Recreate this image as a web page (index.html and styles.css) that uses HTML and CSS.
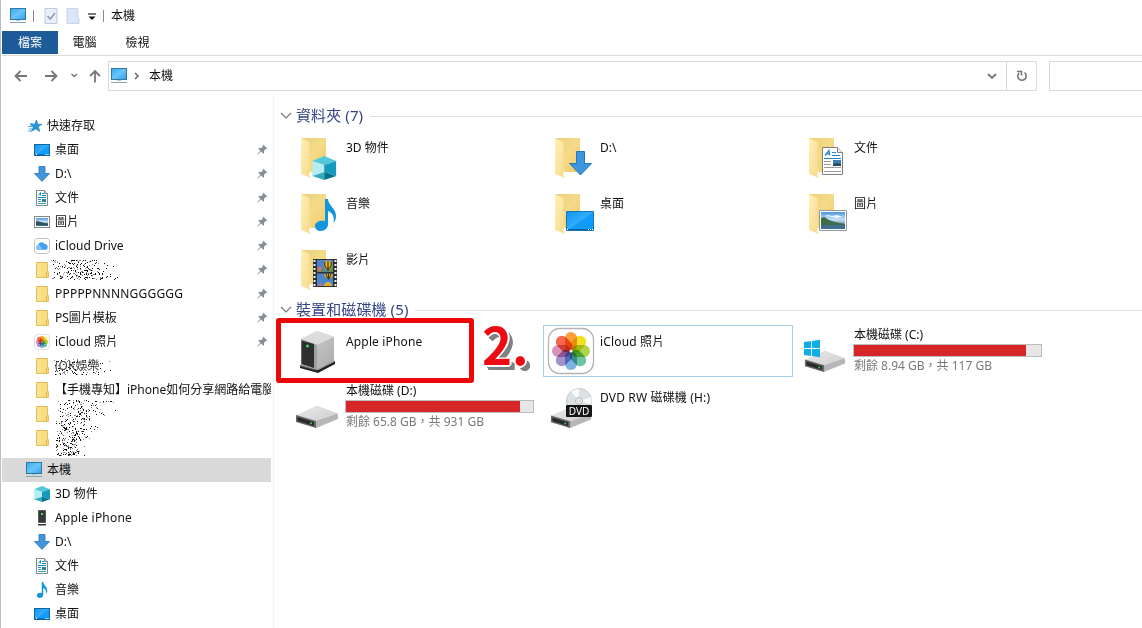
FILE: index.html
```html
<!doctype html>
<html lang="zh-Hant">
  <head>
    <meta charset="UTF-8" />
    <meta name="viewport" content="width=device-width, initial-scale=1.0" />
    <title>本機</title>
    <link rel="stylesheet" href="styles.css">
  </head>
  <body>
    <svg class="sprite" aria-hidden="true">
      <defs>
        <linearGradient id="gBlue" x1="0" y1="0" x2="1" y2="1">
          <stop offset="0" stop-color="#36a9f5" /><stop offset=".5" stop-color="#6ac5fa" /><stop offset="1" stop-color="#2d9fee" />
        </linearGradient>
        <linearGradient id="gDesk" x1="0" y1="0" x2="1" y2="1">
          <stop offset="0" stop-color="#0d96f6" /><stop offset=".5" stop-color="#35acfb" /><stop offset=".52" stop-color="#149bf8" /><stop offset="1" stop-color="#079cff" />
        </linearGradient>
        <linearGradient id="gFolder" x1="0" y1="0" x2="1" y2="1">
          <stop offset="0" stop-color="#ecd07c" /><stop offset=".5" stop-color="#f5da87" /><stop offset="1" stop-color="#eecb68" />
        </linearGradient>
        <linearGradient id="gFlap" x1="0" y1="0" x2="1" y2="1">
          <stop offset="0" stop-color="#fff0b8" /><stop offset="1" stop-color="#f6d98a" />
        </linearGradient>
        <linearGradient id="gTop" x1="0" y1="0" x2="1" y2="1">
          <stop offset="0" stop-color="#e9e9e9" /><stop offset="1" stop-color="#cfcfd1" />
        </linearGradient>
        <linearGradient id="gTower" x1="0" y1="0" x2="1" y2="1">
          <stop offset="0" stop-color="#d4d4d4" /><stop offset="1" stop-color="#a9a9a9" />
        </linearGradient>
        <linearGradient id="gSky" x1="0" y1="0" x2="0" y2="1">
          <stop offset="0" stop-color="#4f94dd" /><stop offset=".45" stop-color="#c5e2f7" /><stop offset=".7" stop-color="#6f9fb8" /><stop offset="1" stop-color="#355e7c" />
        </linearGradient>
      </defs>

      <symbol id="pc" viewBox="0 0 18 16">
        <rect x="1.500" y=".5" width="15" height="11" fill="url(#gBlue)" stroke="#33769f" />
        <path d="M7 12h4v1H7z" fill="#a6c9dd" />
        <path d="M1 14.500h16" stroke="#86a2b3" />
      </symbol>
      <symbol id="star" viewBox="0 0 16 16">
        <path d="M9.500 2l1.200 4.200H15l-3.700 2.500 1.600 5-4.100-2.800-4.500 2.600 2-4.600L3 6.200h4.600z" fill="#2596da" stroke="#197bbd" stroke-width=".6" />
        <path d="M1 8.500h4M2 11h3M1 13h3M3 5.800h3" stroke="#46a9e2" />
      </symbol>
      <symbol id="desk" viewBox="0 0 16 16">
        <rect x=".5" y="2.500" width="15" height="11" fill="url(#gDesk)" stroke="#17679f" />
        <path d="M1 13h1M3 13h8" stroke="#0b4b7d" />
        <path d="M2 12.500h1M11.500 12.500h1M13.500 12.500h1" stroke="#fff" />
      </symbol>
      <symbol id="down" viewBox="0 0 16 16">
        <path d="M5 .5h6v7h4.500L8 15.400.5 7.500H5z" fill="#3f96dc" stroke="#2373b0" stroke-width=".8" />
      </symbol>
      <symbol id="doc" viewBox="0 0 16 16">
        <path d="M2.500.5h8l3 3v12h-11z" fill="#fff" stroke="#7e8a91" />
        <path d="M10.500.5v3h3" fill="#e3e7ea" stroke="#7e8a91" />
        <path d="M4.500 5.500L6.500 2.500v3M8 3.500h2M8 5.500h4M4 7.500h8" fill="none" stroke="#1793b9" />
        <path d="M4 9.500h3M4 11.500h3M4 13.500h8" stroke="#3f9ebc" />
        <path d="M8 9h4v3H8z" fill="#2f8196" />
      </symbol>
      <symbol id="pic" viewBox="0 0 16 16">
        <rect x=".5" y="2.500" width="15" height="11" fill="#fff" stroke="#82898e" />
        <path d="M2 4h12v8H2z" fill="url(#gSky)" />
        <path d="M2 7l3 .5L10 9l4 .4V11H2z" fill="#2c5261" />
      </symbol>
      <symbol id="cloud" viewBox="0 0 16 16">
        <rect x=".5" y=".5" width="15" height="15" rx="3" fill="#fff" stroke="#b9c0c6" />
        <path d="M4.300 11.800a2.300 2.300 0 0 1-.2-4.500A3.600 3.600 0 0 1 10.800 6a3 3 0 0 1 1 5.800z" fill="#3f9ff0" />
        <path d="M4.300 11.800a2.300 2.300 0 1 1 2-3.500 4 4 0 0 1 2 3.500z" fill="#7cc2f8" />
      </symbol>
      <symbol id="fold" viewBox="0 0 16 16">
        <path d="M2.500.5h11v9h.9v5.900H2.500z" fill="#f9dd80" stroke="#e2bd59" />
        <path d="M3 1h4v14H3z" fill="#fde898" opacity=".6" />
        <path d="M12.500 10v5" stroke="#dcb44c" />
      </symbol>
      <symbol id="cube" viewBox="0 0 24 24">
        <path d="M0 5L12 0l12 5-12 4z" fill="#56c6da" />
        <path d="M0 5l12 4v7L0 20z" fill="#b4edf2" />
        <path d="M24 5L12 9v7l12 4z" fill="#149abf" />
        <path d="M0 20l12-4v8z" fill="#34adbe" />
        <path d="M24 20l-12-4v8z" fill="#05728b" />
      </symbol>
      <symbol id="tower-s" viewBox="0 0 16 16">
        <path d="M4.500.5h7v12h-7z" fill="#343a38" stroke="#555b59" />
        <path d="M7 3h2v2H7z" fill="#58d467" />
        <path d="M4 14h8v1.500H4z" fill="#33373a" />
      </symbol>
      <symbol id="note" viewBox="0 0 21 32">
        <path d="M10 0h3c.5 7 8 9 8 17 0 3-1 5-2.500 7 1-6-.5-10-5.500-12v13c0 4-3 7-7 7-3.500 0-6-2-6-5 0-4 5-6 10-5z" fill="#1295dc" />
      </symbol>
      <symbol id="flower" viewBox="0 0 48 48">
        <rect x="1.500" y="1.500" width="45" height="45" rx="11" fill="#fff" stroke="#b4b4b4" stroke-width="1.300" />
        <g class="petals">
          <rect x="18" y="5" width="12" height="18.500" rx="6" fill="#f9a03a" />
          <rect x="18" y="5" width="12" height="18.500" rx="6" fill="#f1e01f" transform="rotate(45 24 24)" />
          <rect x="18" y="5" width="12" height="18.500" rx="6" fill="#b1d249" transform="rotate(90 24 24)" />
          <rect x="18" y="5" width="12" height="18.500" rx="6" fill="#6cc39d" transform="rotate(135 24 24)" />
          <rect x="18" y="5" width="12" height="18.500" rx="6" fill="#7db5e2" transform="rotate(180 24 24)" />
          <rect x="18" y="5" width="12" height="18.500" rx="6" fill="#a592cd" transform="rotate(225 24 24)" />
          <rect x="18" y="5" width="12" height="18.500" rx="6" fill="#d693bc" transform="rotate(270 24 24)" />
          <rect x="18" y="5" width="12" height="18.500" rx="6" fill="#f2694c" transform="rotate(315 24 24)" />
        </g>
        <circle cx="24" cy="24" r="1.500" fill="#fff" />
      </symbol>
      <symbol id="pin" viewBox="0 0 12 12">
        <path d="M7 .8L11.200 5l-1 .7-.8-.2-1.700 1.800.1 2.300-1 .9-2.300-2.300L1 11.500l-.5-.5 3.200-3.500L1.500 5.200l.9-.9 2.300.1L6.500 2.600l-.2-.9z" fill="#858d94" />
      </symbol>

      <symbol id="bigfold" viewBox="0 0 48 48">
        <path d="M8 5h25v34H15z" fill="url(#gFolder)" />
        <path d="M8 5l8.500 4v23l1.500 6v7L8 41z" fill="url(#gFlap)" />
        <path d="M16.500 40l1.500-2v6l-2-1z" fill="#fffdf3" />
      </symbol>
      <symbol id="drive" viewBox="0 0 42 22">
        <path d="M0 10L21 0l21 8v5L20 22 0 15z" fill="#b7b7b9" />
        <path d="M0 9L21 0l21 7.500L20 15z" fill="url(#gTop)" />
        <path d="M0 9l20 6v7L0 16z" fill="#686868" />
        <path d="M1.500 11L18 16v4L1.500 15z" fill="#292b2a" />
        <path d="M14 16.200l2 .6v1.500l-2-.6z" fill="#3fd457" />
      </symbol>
    </svg>

    <div class="window">
      <header class="titlebar">
        <svg class="ico-pc"><use href="#pc" /></svg>
        <span class="sep"></span>
        <svg class="quick" viewBox="0 0 14 16"><path d="M1 .5h12v15H1z" fill="#eaf0fa" stroke="#bccbe0" /><path d="M3.500 8l2.700 3L11 5" fill="none" stroke="#8b99ad" stroke-width="1.500" /></svg>
        <svg class="quick" viewBox="0 0 14 16"><path d="M1 .5h11v10h1v5H1z" fill="#dce6f6" stroke="#c8d5ea" /></svg>
        <svg class="more" viewBox="0 0 8 8"><path d="M0 1h8" stroke="#222" stroke-width="1.200" /><path d="M.5 3.500h7L4 7z" fill="#111" /></svg>
        <span class="sep sep-late"></span>
        <span>本機</span>
      </header>
      <nav class="tabs">
        <span class="tab tab-file">檔案</span>
        <span class="tab">電腦</span>
        <span class="tab">檢視</span>
      </nav>
      <div class="navbar">
        <svg class="arrows" viewBox="0 0 90 16" fill="none" stroke="#777" stroke-width="1.800">
          <path d="M13 8H1.500M6.500 3L1.500 8l5 5" />
          <path d="M31 8h11.500M37.500 3l5 5-5 5" />
          <path d="M57.500 6l2.700 2.500L63 6" stroke-width="1.500" />
          <path d="M81 14.500V3M76 8l5-5 5 5" />
        </svg>
        <div class="address">
          <svg class="ico-pc"><use href="#pc" /></svg>
          <svg class="crumb" viewBox="0 0 6 8"><path d="M1 1l3 3-3 3" fill="none" stroke="#666" stroke-width="1.500" /></svg>
          <span>本機</span>
          <svg class="drop" viewBox="0 0 10 8"><path d="M1 2l4 4 4-4" fill="none" stroke="#777" stroke-width="1.900" /></svg>
          <div class="refresh">
            <svg viewBox="0 0 12 12"><path d="M8.500 2.700a4.200 4.200 0 1 1-5.500.4M1 1.500h4.500v4" fill="none" stroke="#777" stroke-width="1.600" /></svg>
          </div>
        </div>
        <div class="search"></div>
      </div>

      <div class="body">
        <aside class="sidebar">
          <div class="row root"><svg><use href="#star" /></svg><span>快速存取</span></div>
          <div class="row"><svg><use href="#desk" /></svg><span>桌面</span><svg class="pin"><use href="#pin" /></svg></div>
          <div class="row"><svg><use href="#down" /></svg><span>D:\</span><svg class="pin"><use href="#pin" /></svg></div>
          <div class="row"><svg><use href="#doc" /></svg><span>文件</span><svg class="pin"><use href="#pin" /></svg></div>
          <div class="row"><svg><use href="#pic" /></svg><span>圖片</span><svg class="pin"><use href="#pin" /></svg></div>
          <div class="row"><svg><use href="#cloud" /></svg><span>iCloud Drive</span><svg class="pin"><use href="#pin" /></svg></div>
          <div class="row"><svg><use href="#fold" /></svg><canvas class="spray spray-a" width="68" height="20" data-seed="7" data-count="230"></canvas><svg class="pin"><use href="#pin" /></svg></div>
          <div class="row"><svg><use href="#fold" /></svg><span class="en">PPPPPNNNNGGGGGG</span><svg class="pin"><use href="#pin" /></svg></div>
          <div class="row"><svg><use href="#fold" /></svg><span>PS圖片模板</span><svg class="pin"><use href="#pin" /></svg></div>
          <div class="row"><svg><use href="#flower" /></svg><span>iCloud 照片</span><svg class="pin"><use href="#pin" /></svg></div>
          <div class="row"><svg><use href="#fold" /></svg><span class="hidden-name">(OK娛樂</span><canvas class="spray spray-b" width="60" height="16" data-seed="19" data-count="110"></canvas></div>
          <div class="row"><svg><use href="#fold" /></svg><span class="clip">【手機專知】iPhone如何分享網路給電腦</span></div>
          <div class="row"><svg><use href="#fold" /></svg><canvas class="spray spray-c" width="68" height="56" data-seed="31" data-count="380" data-taper="1"></canvas></div>
          <div class="row"><svg><use href="#fold" /></svg></div>
          <div class="row root selected"><svg class="ico-pc"><use href="#pc" /></svg><span>本機</span></div>
          <div class="row"><svg><use href="#cube" /></svg><span>3D 物件</span></div>
          <div class="row"><svg><use href="#tower-s" /></svg><span class="en">Apple iPhone</span></div>
          <div class="row"><svg><use href="#down" /></svg><span>D:\</span></div>
          <div class="row"><svg><use href="#doc" /></svg><span>文件</span></div>
          <div class="row"><svg><use href="#note" /></svg><span>音樂</span></div>
          <div class="row"><svg><use href="#desk" /></svg><span>桌面</span></div>
        </aside>

        <main class="content">
          <h2 class="group"><svg viewBox="0 0 12 8"><path d="M1 1l5 5 5-5" fill="none" stroke="#777" stroke-width="1.200" /></svg><span>資料夾 (7)</span></h2>
          <div class="grid">
            <div class="item">
              <svg viewBox="0 0 48 48"><use href="#bigfold" /><use href="#cube" x="19" y="23" width="24.500" height="24" /></svg>
              <span>3D 物件</span>
            </div>
            <div class="item">
              <svg viewBox="0 0 48 48"><use href="#bigfold" /><path d="M29.500 18.500h8v12h7L33.500 42l-11-11.500h7z" fill="#3c96df" stroke="#2578b8" /></svg>
              <span>D:\</span>
            </div>
            <div class="item">
              <svg viewBox="0 0 48 48"><use href="#bigfold" /><path d="M21.500 14.500h15l5 5v22h-20z" fill="#fff" stroke="#7f7f7f" /><path d="M36.500 14.500v5h5" fill="#eee" stroke="#7f7f7f" /><path d="M24 22.500l4-5 .8 5M25.300 20.800h3.500" fill="none" stroke="#2086d2" stroke-width="1.300" /><path d="M31 19.500h4M31 22.500h8M23 25.500h17" stroke="#2086c8" /><path d="M23 28.500h7M23 31.500h7M23 34.500h17M23 38.500h17" stroke="#9d9d9d" /><path d="M32 27h8v6h-8z" fill="#3a7fae" /><path d="M32 31l4-1 4 1v2h-8z" fill="#25495b" /></svg>
              <span>文件</span>
            </div>
            <div class="item">
              <svg viewBox="0 0 48 48"><use href="#bigfold" /><use href="#note" x="22" y="10" width="21" height="32" /></svg>
              <span>音樂</span>
            </div>
            <div class="item">
              <svg viewBox="0 0 48 48"><use href="#bigfold" /><path d="M19.500 22.500h27v19h-27z" fill="url(#gDesk)" stroke="#1276b9" /><path d="M20 40.500h26" stroke="#0a62a2" /><path d="M20 40.500h1M41 40.500h1M43 40.500h1M45 40.500h1" stroke="#fff" /></svg>
              <span>桌面</span>
            </div>
            <div class="item">
              <svg viewBox="0 0 48 48"><use href="#bigfold" /><path d="M18.500 21.500h27v20h-27z" fill="#fff" stroke="#919a9f" /><path d="M20 23h24v17H20z" fill="url(#gSky)" /><path d="M24 27l3-1 4 1 5-1 6 2-6 1-5-1z" fill="#edf6fc" /><path d="M20 29l3-1 5 3 6 2 10 2v1H20z" fill="#3f6d48" /><path d="M20 36h24v4H20z" fill="#3f6f90" /></svg>
              <span>圖片</span>
            </div>
            <div class="item">
              <svg viewBox="0 0 48 48"><use href="#bigfold" /><path d="M20 14h24v28H20z" fill="#303030" /><path d="M21.500 15v27M42.500 15v27" stroke="#f2f2f2" stroke-width="2" stroke-dasharray="2 2" /><path d="M24 15h16v12H24zM24 28.500h16V41H24z" fill="#4a83ce" /><path d="M24 22l5 1 4 4h-9zM34 25l6-3v5h-6z" fill="#5f8b54" /><path d="M24 24l3-3 2 3-2 3z" fill="#d86f7b" /><ellipse cx="35" cy="20" rx="4.500" ry="4.500" fill="#e6b72e" /><path d="M35 16v10M32 17c-1 4 0 6 3 7 3-1 4-3 3-7" fill="none" stroke="#3c3310" stroke-width="1.200" /><path d="M31 29h9c0 3-2 4-4 5-3-1-5-2-5-5z" fill="#d6a62d" /><path d="M35.500 28.500v6M33 29l2 5M38 29l-2 5" stroke="#3c3310" /><path d="M31 41c0-3 2-4 4-4s4 1 4 4z" fill="#dcaf38" /><path d="M24 40l4-2 4 3h-8z" fill="#9c7b9f" /></svg>
              <span>影片</span>
            </div>
          </div>

          <h2 class="group"><svg viewBox="0 0 12 8"><path d="M1 1l5 5 5-5" fill="none" stroke="#777" stroke-width="1.200" /></svg><span>裝置和磁碟機 (5)</span></h2>
          <div class="grid">
            <div class="item">
              <svg viewBox="0 0 48 48"><path d="M7 38l18 5 17-9v3L25 46 7 41z" fill="#222" /><path d="M8 12L24 4l17 6v25l-17 8-16-5z" fill="url(#gTower)" /><path d="M8 12L24 4l17 6-17 8z" fill="#dcdcdc" /><path d="M8 12l16 6v25L8 38z" fill="#a0a0a0" /><path d="M8.500 13.500L21 17v24L8.500 37z" fill="#2e3030" /><path d="M7 39l17 4 18-9" fill="none" stroke="#777" stroke-width=".7" /><circle cx="14.500" cy="19" r="1.600" fill="#36d94b" /></svg>
              <span class="wide">Apple iPhone</span>
            </div>
            <div class="item focused">
              <svg viewBox="0 0 48 48"><use href="#flower" /></svg>
              <span class="wide">iCloud 照片</span>
            </div>
            <div class="item disk">
              <svg viewBox="0 0 48 48"><use href="#drive" x="3" y="24" width="42" height="21" /><path d="M3 15l7-1v7H3zM11 13.900l8-1.200V21h-8zM3 22h7v7l-7-1zM11 22h8v8.200L11 29z" fill="#10aee6" /></svg>
              <div class="info"><span>本機磁碟 (C:)</span><div class="bar"><i style="width: 92%"></i></div><small>剩餘 8.94 GB，共 117 GB</small></div>
            </div>
            <div class="item disk">
              <svg viewBox="0 0 48 48"><use href="#drive" x="3" y="23" width="42" height="22" /></svg>
              <div class="info"><span>本機磁碟 (D:)</span><div class="bar"><i style="width: 93%"></i></div><small>剩餘 65.8 GB，共 931 GB</small></div>
            </div>
            <div class="item">
              <svg viewBox="0 0 48 48"><use href="#drive" x="3" y="24" width="42" height="21" /><circle cx="32" cy="18" r="12.500" fill="#dce2e3" stroke="#c1c8c9" /><path d="M32 18L24 8.500a12 12 0 0 1 8-2.800zM32 18l12 3a12 12 0 0 0 0-7z" fill="#f7f9f9" /><circle cx="32" cy="18" r="3.500" fill="#eef0f0" stroke="#b3b9ba" /><circle cx="32" cy="18" r="1.300" fill="#fff" stroke="#b3b9ba" stroke-width=".6" /><rect x="19" y="22" width="26" height="12" rx="1" fill="#151515" /><text class="dvd" x="32" y="31.700" text-anchor="middle">DVD</text></svg>
              <span class="wide">DVD RW 磁碟機 (H:)</span>
            </div>
          </div>

          <!-- tutorial step marker -->
          <div class="highlight"></div>
          <div class="step">2.</div>
        </main>
      </div>
    </div>

    <script>
      // speckle over the private folder names
      document.querySelectorAll(".spray").forEach((canvas) => {
        const ctx = canvas.getContext("2d");
        const { width, height } = canvas;
        let seed = Number(canvas.dataset.seed);
        const random = () => {
          seed = (seed * 16807) % 2147483647;
          return seed / 2147483647;
        };
        for (let i = 0; i < 20; i++) random();

        for (let i = 0; i < Number(canvas.dataset.count); i++) {
          const y = Math.floor(random() * height);
          const reach = canvas.dataset.taper ? 1 - (y / height) * 0.6 : 1;
          const x = Math.floor(((random() + random() * random()) / 2) * width * reach * 1.15);
          ctx.fillStyle = random() > 0.4 ? "#111" : "#888";
          ctx.fillRect(x, y, 1, 1);
        }
      });
    </script>
  </body>
</html>
```
FILE: styles.css
```css
* {
  margin: 0;
  padding: 0;
  box-sizing: border-box;
}

body {
  font-family: "Noto Sans", "Noto Sans CJK TC", sans-serif;
  font-size: 12px;
  line-height: 16px;
  color: #111;
  background: #fff;
  overflow: hidden;
}

svg {
  display: block;
  flex: none;
}

.sprite {
  position: absolute;
  width: 0;
  height: 0;
}

.petals {
  isolation: isolate;
}

.petals rect {
  mix-blend-mode: multiply;
}

.window {
  height: 628px;
  border-left: 1px solid #b9bdc9;
  padding-left: 1px;
  display: flex;
  flex-direction: column;
}

.ico-pc {
  width: 18px;
  height: 16px;
}

.titlebar {
  height: 31px;
  display: flex;
  align-items: center;
  padding-left: 7px;
}

.sep {
  width: 1px;
  height: 12px;
  background: #8a8a8a;
  margin: 0 10px 0 6px;
}

.sep-late {
  margin: 0 7px 0 7px;
}

.quick {
  width: 14px;
  height: 16px;
  margin-right: 8px;
}

.more {
  width: 8px;
  height: 8px;
  margin-top: 3px;
}

.tabs {
  height: 25px;
  display: flex;
  border-bottom: 1px solid #d9dadb;
}

.tab {
  width: 53px;
  height: 23px;
  line-height: 24px;
  text-align: center;
}

.tab-file {
  width: 56px;
  background: #1e5c99;
  color: #fff;
}

.navbar {
  height: 40px;
  padding-top: 5px;
  display: flex;
}

.arrows {
  width: 90px;
  height: 16px;
  margin: 7px 4px 0 12px;
}

.address {
  width: 929px;
  height: 30px;
  border: 1px solid #d9d9d9;
  display: flex;
  align-items: center;
}

.address .ico-pc {
  margin-left: 1px;
}

.crumb {
  width: 6px;
  height: 8px;
  margin: 0 9px 0 6px;
}

.drop {
  width: 10px;
  height: 8px;
  margin-left: auto;
  margin-right: 9px;
}

.refresh {
  width: 30px;
  height: 28px;
  border-left: 1px solid #d9d9d9;
  display: flex;
  align-items: center;
  justify-content: center;
}

.refresh svg {
  width: 12px;
  height: 12px;
}

.search {
  flex: 1;
  height: 30px;
  margin-left: 12px;
  border: 1px solid #d9d9d9;
  border-right: none;
}

.body {
  flex: 1;
  min-height: 0;
  display: flex;
}

.sidebar {
  width: 272px;
  padding-top: 18px;
  border-right: 1px solid #f3f3f3;
}

.row {
  position: relative;
  height: 24px;
  width: 269px;
  padding-left: 32px;
  display: flex;
  align-items: center;
  gap: 5px;
  white-space: nowrap;
}

.row svg {
  width: 16px;
  height: 16px;
}

.row .pin {
  width: 11px;
  height: 11px;
  margin: -1px 3px 0 auto;
}

.root {
  padding-left: 25px;
  gap: 4px;
}

.selected {
  margin-top: 8px;
  padding-left: 23px;
  background: #d9d9d9;
}

.row .ico-pc {
  width: 18px;
}

.en {
  letter-spacing: 0.2px;
}

.wide {
  letter-spacing: 0.15px;
}

.clip {
  overflow: hidden;
}

.hidden-name {
  color: #444;
}

/* speckles lie over the row text */
.spray {
  position: absolute;
  left: 48px;
  top: 2px;
}

.spray-b {
  left: 51px;
  top: 5px;
}

.spray-c {
  left: 53px;
  top: -2px;
}

.content {
  position: relative;
  flex: 1;
  padding: 5px 0 0 15px;
}

.group {
  height: 30px;
  margin-left: -9px;
  display: flex;
  align-items: center;
  font-size: 15px;
  font-weight: 400;
  color: #344586;
  white-space: nowrap;
}

.group svg {
  width: 12px;
  height: 8px;
  margin-right: 4px;
}

.group span {
  margin-top: -3px;
  letter-spacing: 0.1px;
}

.group::after {
  content: "";
  flex: 1;
  height: 1px;
  margin-left: 7px;
  background: #e0e0e0;
}

.grid {
  display: grid;
  grid-template-columns: repeat(3, 250px);
  grid-auto-rows: 52px;
  gap: 4px;
}

.item {
  display: flex;
  padding: 2px 4px;
  gap: 5px;
  white-space: nowrap;
}

.item > svg {
  width: 48px;
  height: 48px;
}

.item > span {
  margin-top: 7px;
}

.focused {
  outline: 1px solid #a6cfe4;
  outline-offset: -1px;
}

.info {
  width: 189px;
  margin-left: -1px;
}

.info span,
.info small {
  display: block;
  padding-left: 1px;
  line-height: 16px;
}

.info small {
  font-size: 12px;
  color: #7a7a7a;
}

.bar {
  height: 13px;
  margin: 1px 0;
  border: 1px solid #bcbcbc;
  background: #e6e6e6;
}

.bar i {
  display: block;
  height: 100%;
  background: #d62628;
}

.dvd {
  font-size: 10px;
  fill: #fff;
}

.highlight {
  position: absolute;
  left: 2px;
  top: 222px;
  width: 198px;
  height: 65px;
  border: 5px solid #ec0606;
  border-radius: 3px;
}

.step {
  position: absolute;
  left: 208px;
  top: 215px;
  font: bold 51px/64px "Noto Sans CJK TC", sans-serif;
  color: #ee0a12;
  text-shadow:
    1px 1px 0 #fff,
    -1px -1px 0 #fff,
    -1px 1px 0 #fff,
    1px -1px 0 #fff,
    2px 0 0 #fff,
    0 2px 0 #fff,
    3px 3px 0 #808080,
    4px 4px 0 #808080,
    5px 4px 0 #808080,
    4px 5px 0 #808080,
    5px 5px 0 #808080;
}
```
